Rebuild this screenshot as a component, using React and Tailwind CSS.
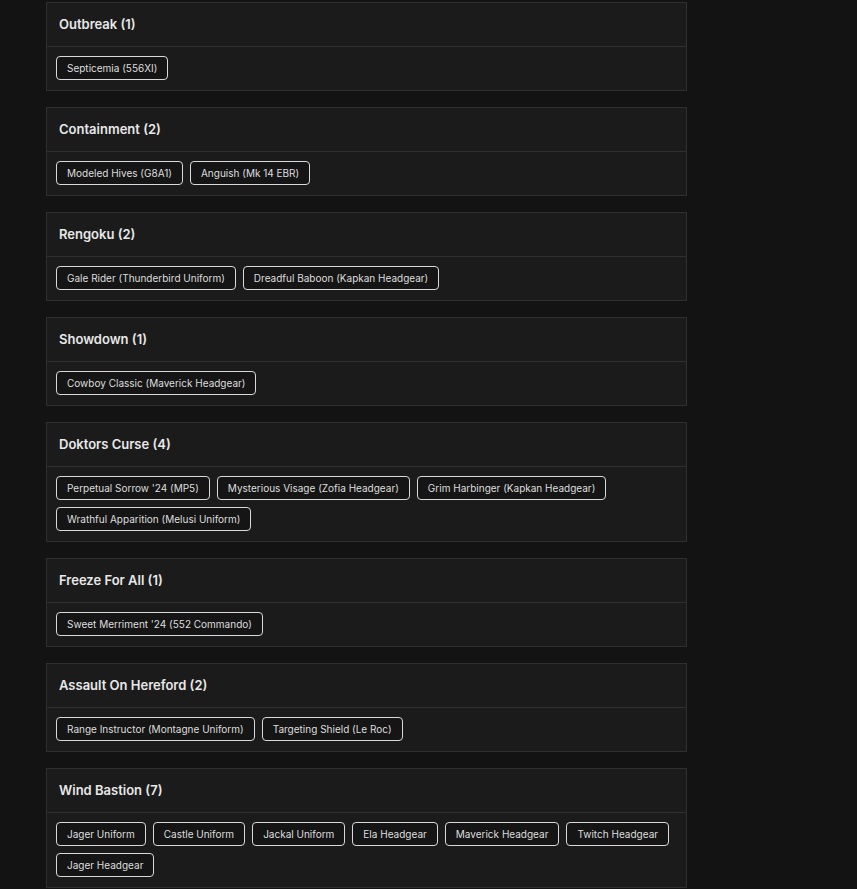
import React from 'react';

const events = [
  { name: 'Outbreak', items: ['Septicemia (556XI)'] },
  { name: 'Containment', items: ['Modeled Hives (G8A1)', 'Anguish (Mk 14 EBR)'] },
  { name: 'Rengoku', items: ['Gale Rider (Thunderbird Uniform)', 'Dreadful Baboon (Kapkan Headgear)'] },
  { name: 'Showdown', items: ['Cowboy Classic (Maverick Headgear)'] },
  {
    name: 'Doktors Curse',
    items: [
      "Perpetual Sorrow '24 (MP5)",
      'Mysterious Visage (Zofia Headgear)',
      'Grim Harbinger (Kapkan Headgear)',
      'Wrathful Apparition (Melusi Uniform)',
    ],
  },
  { name: 'Freeze For All', items: ["Sweet Merriment '24 (552 Commando)"] },
  { name: 'Assault On Hereford', items: ['Range Instructor (Montagne Uniform)', 'Targeting Shield (Le Roc)'] },
  {
    name: 'Wind Bastion',
    items: [
      'Jager Uniform',
      'Castle Uniform',
      'Jackal Uniform',
      'Ela Headgear',
      'Maverick Headgear',
      'Twitch Headgear',
      'Jager Headgear',
    ],
  },
];

const EventCard = ({ name, items }) => (
  <div className="bg-[#1b1b1b] border border-[#2f2f2f]">
    <div className="h-[44px] px-3 flex items-center border-b border-[#2f2f2f]">
      <h5 className="text-[13px] font-semibold text-[#e8e8e8]">
        {name} ({items.length})
      </h5>
    </div>
    <div className="px-[9px] pt-[9px] pb-[10px] flex flex-wrap gap-[7px]">
      {items.map((item) => (
        <span
          key={item}
          className="h-6 px-[10px] flex items-center rounded-[4px] border border-[#d9d9d9] bg-[#151515] text-[10px] text-[#dedede]"
        >
          {item}
        </span>
      ))}
    </div>
  </div>
);

export default function App() {
  return (
    <div
      className="min-h-screen bg-[#131313] pl-[46px] pt-[2px] pb-4"
      style={{ fontFamily: 'Inter, "Noto Sans", sans-serif' }}
    >
      <div className="w-[641px] flex flex-col gap-4">
        {events.map((ev) => (
          <EventCard key={ev.name} {...ev} />
        ))}
      </div>
    </div>
  );
}
